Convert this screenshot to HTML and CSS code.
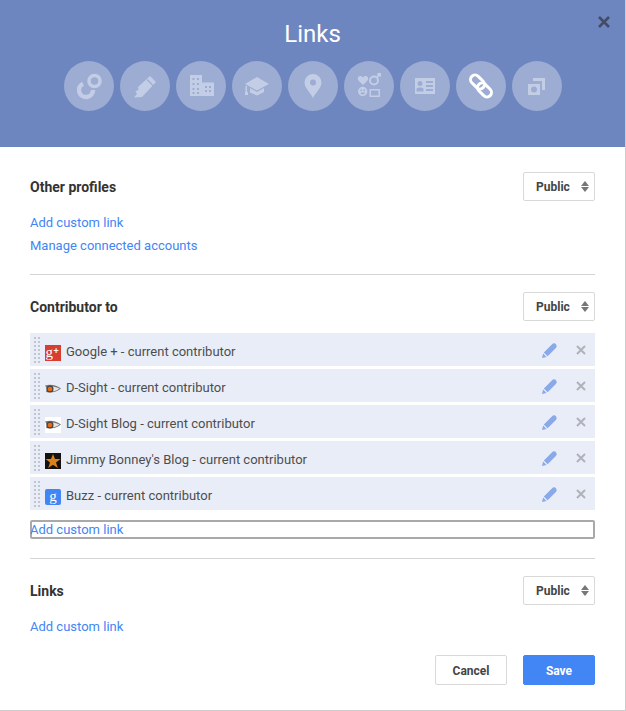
FILE: index.html
```html
<!DOCTYPE html>
<html>
	<head>
		<meta charset="utf-8">
		<title>Links</title>
		<link rel="stylesheet" href="styles.css">
	</head>
	<body>
		<div class="dialog">
			<div class="header">
				<h1 class="title">Links</h1>
				<svg class="close" viewBox="0 0 12 12"><path d="M1 1L11 11M11 1L1 11"/></svg>
				<ul class="tabs">
					<li class="tab"><svg viewBox="0 0 50 50"><circle class="ring" cx="30.5" cy="20" r="5.500"/><path class="ring-big" d="M19 22.700A7 7 0 1 0 29 29"/></svg></li>
					<li class="tab"><svg viewBox="0 0 50 50"><path d="M30 15L36 21L22 36L14 36.500L17 33L15.500 30L18.500 29L18 26Z"/><path class="cut" d="M27 18.500L33 24.500"/></svg></li>
					<li class="tab"><svg viewBox="0 0 50 50"><path fill-rule="evenodd" d="M14 14H26V21.500H38V35H14ZM16.500 17V19H18.500V17ZM21 17V19H23V17ZM16.500 22V24H18.500V22ZM21 22V24H23V22ZM16.500 27V29H18.500V27ZM21 27V29H23V27ZM16.500 31V33H18.500V31ZM21 31V33H23V31ZM29 25V27H31V25ZM33 25V27H35V25ZM29 29V31H31V29ZM33 29V31H35V29Z"/></svg></li>
					<li class="tab"><svg viewBox="0 0 50 50"><path d="M25 16L37 23L25 29.500L13 23ZM18 27L25 31L32 27V31L25 34.500L18 31.500ZM13.500 25H15V31H16V34H13V31H13.500Z"/></svg></li>
					<li class="tab"><svg viewBox="0 0 50 50"><path fill-rule="evenodd" d="M25 13A8.500 8.500 0 0 1 33.500 21.500C33.500 27 28 31 25 37C22 31 16.500 27 16.500 21.500A8.500 8.500 0 0 1 25 13ZM25 18.500A3 3 0 1 0 25 24.500A3 3 0 1 0 25 18.500Z"/></svg></li>
					<li class="tab"><svg viewBox="0 0 50 50"><path d="M19 24L14.500 19.500C13 17.500 14 15 16.500 15C17.700 15 18.500 15.700 19 16.500C19.500 15.700 20.300 15 21.500 15C24 15 25 17.500 23.500 19.500Z"/><path fill-rule="evenodd" d="M14 30.500A4.700 4.700 0 1 1 23.400 30.500A4.700 4.700 0 1 1 14 30.500ZM16.500 28.500V30H18V28.500ZM19.500 28.500V30H21V28.500ZM16.500 31.500C17 34 20.500 34 21 31.500Z"/><path fill-rule="evenodd" d="M25.500 28H36V36H25.500ZM27 29.500V34.500H34.500V29.500Z"/><circle class="ring-thin" cx="30" cy="19.500" r="4"/><path class="ring-thin" d="M33 16L36 13M33.500 13H36V15.500"/></svg></li>
					<li class="tab"><svg viewBox="0 0 50 50"><path fill-rule="evenodd" d="M15 17H35V33H15ZM20 20A2.500 2.500 0 1 0 20 25A2.500 2.500 0 1 0 20 20ZM16.500 30.500H23.500V28C23.500 26 16.500 26 16.500 28ZM26 20V22H33V20ZM26 24V26H33V24ZM26 28V30H33V28Z"/></svg></li>
					<li class="tab active"><svg viewBox="0 0 50 50"><rect class="chain" x="13.500" y="16.500" width="16" height="9" rx="4.500" transform="rotate(45 21.500 21)"/><rect class="chain" x="20.500" y="24.500" width="16" height="9" rx="4.500" transform="rotate(45 28.500 29)"/></svg></li>
					<li class="tab"><svg viewBox="0 0 50 50"><path fill-rule="evenodd" d="M16 23H28V34H16ZM22 25.500A3 3 0 1 0 22 31.500A3 3 0 1 0 22 25.500Z"/><path d="M21 17H33V29H30V20H21Z"/></svg></li>
				</ul>
			</div>
			<div class="content">
				<div class="section-head">
					<span class="section-title">Other profiles</span>
					<div class="select">Public<span class="arrows"></span></div>
				</div>
				<ul class="links">
					<li><a class="link">Add custom link</a></li>
					<li><a class="link">Manage connected accounts</a></li>
				</ul>
				<hr class="divider">
				<div class="section-head">
					<span class="section-title">Contributor to</span>
					<div class="select">Public<span class="arrows"></span></div>
				</div>
				<ul class="rows">
					<li class="row">
						<span class="grip"></span>
						<svg class="favicon" viewBox="0 0 16 16"><rect width="16" height="16" fill="#d73d32"/><text x="0.500" y="12" class="fav-g">g</text><text x="8.500" y="9" class="fav-plus">+</text></svg>
						<span class="row-text">Google + - current contributor</span>
						<svg class="edit" viewBox="0 0 16 16"><path d="M10.500 1.500C12 0 14 0 15 1.500C16 3 16 4 14.500 5.500L6 14L2 10ZM1.200 11.200L4.800 14.800L0 16Z"/></svg>
						<svg class="remove" viewBox="0 0 10 10"><path d="M1 1L9 9M9 1L1 9"/></svg>
					</li>
					<li class="row">
						<span class="grip"></span>
						<svg class="favicon" viewBox="0 0 16 16"><path d="M0 4.500C6 2.500 12 4.500 16 7.500C12 11 6 12 1 11C2 9 2 7 0 4.500Z" fill="#777"/><path d="M8 5.500C11 6 13 7 14.500 7.500C12 9.500 10 10 8 10.300Z" fill="#e4e4e4"/><circle cx="5" cy="8" r="3.500" fill="#444"/><circle cx="5" cy="8" r="2.300" fill="#f0690f"/></svg>
						<span class="row-text">D-Sight - current contributor</span>
						<svg class="edit" viewBox="0 0 16 16"><path d="M10.500 1.500C12 0 14 0 15 1.500C16 3 16 4 14.500 5.500L6 14L2 10ZM1.200 11.200L4.800 14.800L0 16Z"/></svg>
						<svg class="remove" viewBox="0 0 10 10"><path d="M1 1L9 9M9 1L1 9"/></svg>
					</li>
					<li class="row">
						<span class="grip"></span>
						<svg class="favicon" viewBox="0 0 16 16"><rect width="16" height="16" fill="#fff"/><path d="M0 4.500C6 2.500 12 4.500 16 7.500C12 11 6 12 1 11C2 9 2 7 0 4.500Z" fill="#777"/><path d="M8 5.500C11 6 13 7 14.500 7.500C12 9.500 10 10 8 10.300Z" fill="#e4e4e4"/><circle cx="5" cy="8" r="3.500" fill="#444"/><circle cx="5" cy="8" r="2.300" fill="#f0690f"/></svg>
						<span class="row-text">D-Sight Blog - current contributor</span>
						<svg class="edit" viewBox="0 0 16 16"><path d="M10.500 1.500C12 0 14 0 15 1.500C16 3 16 4 14.500 5.500L6 14L2 10ZM1.200 11.200L4.800 14.800L0 16Z"/></svg>
						<svg class="remove" viewBox="0 0 10 10"><path d="M1 1L9 9M9 1L1 9"/></svg>
					</li>
					<li class="row">
						<span class="grip"></span>
						<svg class="favicon" viewBox="0 0 16 16"><rect width="16" height="16" fill="#14110e"/><path d="M8 1L10 6H15.500L11 9.500L12.800 15L8 11.700L3.200 15L5 9.500L0.500 6H6Z" fill="#d9821c"/></svg>
						<span class="row-text">Jimmy Bonney's Blog - current contributor</span>
						<svg class="edit" viewBox="0 0 16 16"><path d="M10.500 1.500C12 0 14 0 15 1.500C16 3 16 4 14.500 5.500L6 14L2 10ZM1.200 11.200L4.800 14.800L0 16Z"/></svg>
						<svg class="remove" viewBox="0 0 10 10"><path d="M1 1L9 9M9 1L1 9"/></svg>
					</li>
					<li class="row">
						<span class="grip"></span>
						<svg class="favicon" viewBox="0 0 16 16"><rect width="16" height="16" rx="2" fill="#4285f4"/><text x="8" y="11.500" class="fav-buzz">g</text></svg>
						<span class="row-text">Buzz - current contributor</span>
						<svg class="edit" viewBox="0 0 16 16"><path d="M10.500 1.500C12 0 14 0 15 1.500C16 3 16 4 14.500 5.500L6 14L2 10ZM1.200 11.200L4.800 14.800L0 16Z"/></svg>
						<svg class="remove" viewBox="0 0 10 10"><path d="M1 1L9 9M9 1L1 9"/></svg>
					</li>
				</ul>
				<div class="focused"><a class="link">Add custom link</a></div>
				<hr class="divider divider-low">
				<div class="section-head">
					<span class="section-title">Links</span>
					<div class="select">Public<span class="arrows"></span></div>
				</div>
				<ul class="links">
					<li><a class="link">Add custom link</a></li>
				</ul>
				<div class="buttons">
					<button class="btn">Cancel</button>
					<button class="btn btn-save">Save</button>
				</div>
			</div>
		</div>
	</body>
</html>
```

FILE: styles.css
```css
*{
	margin: 0;
	padding: 0;
	box-sizing: border-box;
}
ul{
	list-style: none;
}
body{
	background-color: #fff;
	font-family: Roboto, "Liberation Sans", sans-serif;
	color: #444;
}
.dialog{
	width: 626px;
	height: 711px;
	border-right: 1px solid #ccc;
	border-bottom: 1px solid #ccc;
}
.header{
	height: 147px;
	background-color: #6e86bf;
	position: relative;
	padding-top: 19px;
}
.title{
	font-size: 24px;
	font-weight: 400;
	line-height: 30px;
	color: #fff;
	text-align: center;
}
.close{
	position: absolute;
	top: 16px;
	right: 15px;
	width: 12px;
	height: 12px;
	fill: none;
	stroke: #434c66;
	stroke-width: 2.6;
}
.tabs{
	display: flex;
	justify-content: center;
	gap: 6px;
	margin-top: 12px;
}
.tab{
	width: 50px;
	height: 50px;
	border-radius: 50%;
	background-color: #9dacd3;
}
.tab svg{
	display: block;
	width: 50px;
	height: 50px;
	fill: #c3cde6;
}
.tab .ring,.tab .ring-big,.tab .ring-thin{
	fill: none;
	stroke: #c3cde6;
}
.tab .ring{
	stroke-width: 3.5;
}
.tab .ring-big{
	stroke-width: 4.5;
}
.tab .ring-thin{
	stroke-width: 2;
}
.tab .cut{
	fill: none;
	stroke: #9dacd3;
	stroke-width: 1.2;
}
.tab .chain{
	fill: none;
	stroke: #fff;
	stroke-width: 3;
}
.content{
	padding: 25px 30px 0;
}
.section-head{
	display: flex;
	justify-content: space-between;
	align-items: center;
	height: 29px;
}
.section-title{
	font-size: 14px;
	font-weight: 700;
	color: #333;
}
.select{
	width: 72px;
	height: 29px;
	border: 1px solid #d9d9d9;
	border-radius: 2px;
	font-size: 12px;
	font-weight: 700;
	line-height: 29px;
	padding-left: 12px;
	position: relative;
}
.arrows{
	position: absolute;
	top: 8px;
	right: 5px;
	width: 8px;
	height: 11px;
}
.arrows::before,.arrows::after{
	content: "";
	position: absolute;
	left: 0;
	border-left: 4px solid transparent;
	border-right: 4px solid transparent;
}
.arrows::before{
	top: 0;
	border-bottom: 5px solid #777;
}
.arrows::after{
	bottom: 0;
	border-top: 5px solid #777;
}
.links{
	margin-top: 9px;
	margin-bottom: 18px;
}
.links li{
	height: 23px;
	line-height: 23px;
}
.link{
	font-size: 13px;
	color: #4285f4;
}
.divider{
	border: 0;
	border-top: 1px solid #d5d5d5;
	margin: 0 0 17px;
}
.divider-low{
	margin-top: 19px;
}
.rows{
	display: flex;
	flex-direction: column;
	gap: 3px;
	margin-top: 12px;
}
.row{
	height: 33px;
	background-color: #e9edf8;
	display: flex;
	align-items: center;
	padding-left: 4px;
	font-size: 13px;
	color: #4d4d4d;
}
.grip{
	width: 6px;
	height: 26px;
	background-image: radial-gradient(circle at 1px 1px, #c2c5d0 1.2px, transparent 1.3px);
	background-size: 4px 4px;
	margin-right: 5px;
}
.favicon{
	width: 16px;
	height: 16px;
	margin-right: 5px;
	margin-top: 7px;
	flex-shrink: 0;
}
.fav-g{
	font-family: "Liberation Serif", serif;
	font-size: 15px;
	fill: #fff;
}
.fav-plus{
	font-family: "Liberation Sans", sans-serif;
	font-size: 9px;
	font-weight: 700;
	fill: #fff;
}
.fav-buzz{
	font-family: "Liberation Serif", serif;
	font-size: 15px;
	fill: #fff;
	text-anchor: middle;
}
.row-text{
	flex: 1;
	margin-top: 3px;
}
.edit{
	width: 15px;
	height: 15px;
	fill: #8aa9e8;
	margin-right: 19px;
	margin-top: 1px;
}
.remove{
	width: 10px;
	height: 10px;
	fill: none;
	stroke: #b0b2b8;
	stroke-width: 2;
	margin-right: 9px;
}
.focused{
	height: 19px;
	margin-top: 10px;
	border: 2px solid #a9a9a9;
	border-radius: 2px;
	line-height: 13px;
}
.focused .link{
	margin-left: -2px;
}
.buttons{
	display: flex;
	justify-content: flex-end;
	gap: 16px;
}
.btn{
	width: 72px;
	height: 30px;
	border: 1px solid #d9d9d9;
	border-radius: 2px;
	background-color: #fff;
	font-family: Roboto, "Liberation Sans", sans-serif;
	font-size: 12px;
	font-weight: 700;
	color: #444;
	padding-top: 2px;
}
.btn-save{
	background-color: #4285f4;
	border-color: #4285f4;
	color: #fff;
}
```
